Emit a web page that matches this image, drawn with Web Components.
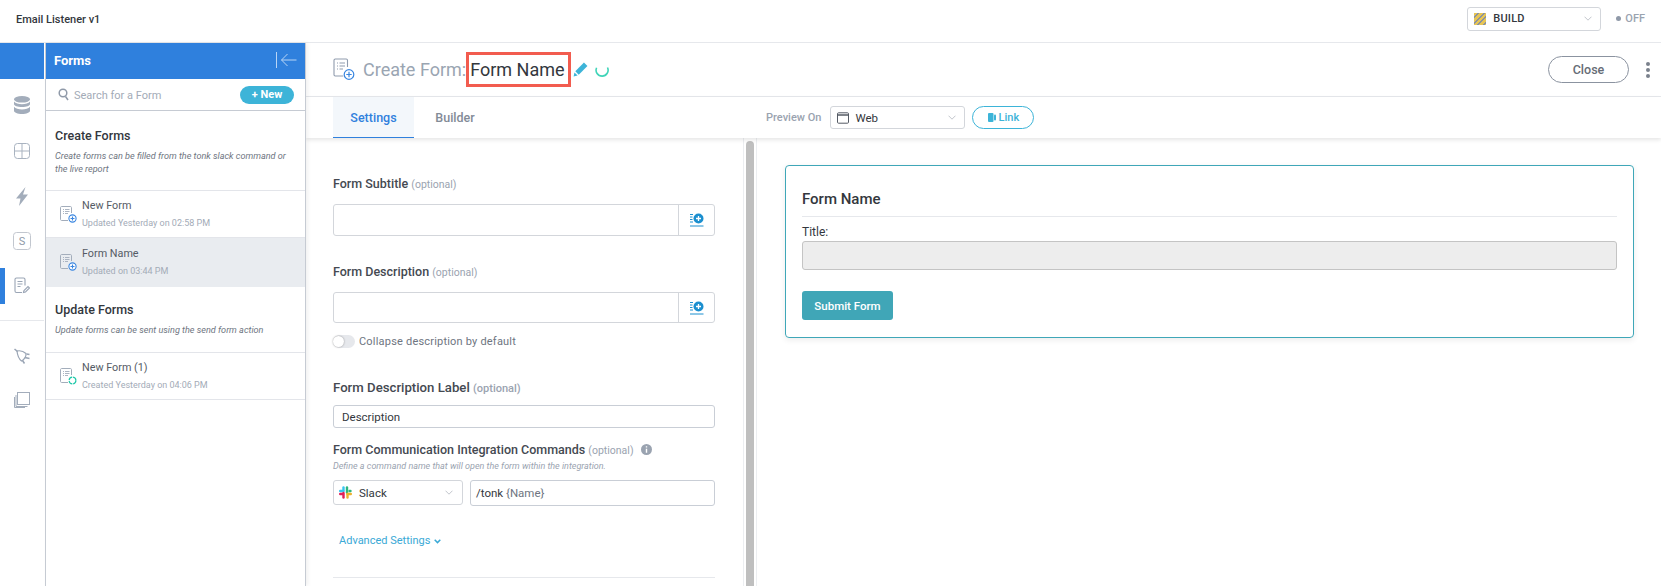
<!DOCTYPE html>
<html lang="en">
<head>
<meta charset="utf-8">
<title>Email Listener v1</title>
<style>
  html, body { margin: 0; height: 100%; overflow: hidden; }
  body { font-family: Roboto, "Liberation Sans", sans-serif; color: #33373d; background: #fff; }
  app-shell { height: 586px; }
</style>
</head>
<body>

<app-shell>
  <top-bar slot="top" name="Email Listener v1"></top-bar>
  <side-rail slot="rail"></side-rail>
  <forms-panel slot="panel">
    <forms-group title="Create Forms" note="Create forms can be filled from the tonk slack command or the live report" style="--note-h:80px;--pad:17px">
      <form-item name="New Form" meta="Updated Yesterday on 02:58 PM" kind="create"></form-item>
      <form-item name="Form Name" meta="Updated on 03:44 PM" kind="create" active></form-item>
    </forms-group>
    <forms-group title="Update Forms" note="Update forms can be sent using the send form action" style="--note-h:66px;--pad:15px">
      <form-item name="New Form (1)" meta="Created Yesterday on 04:06 PM" kind="update"></form-item>
    </forms-group>
  </forms-panel>
  <form-header slot="head" label="Create Form:" name="Form Name"></form-header>
  <tab-bar slot="tabs"></tab-bar>
  <settings-pane slot="settings"></settings-pane>
  <preview-pane slot="preview"></preview-pane>
</app-shell>

<script>
// small helper, every element gets the same open shadow root setup
function mount(el, html) {
  el.attachShadow({ mode: 'open' }).innerHTML = html;
}

const chevron = `<svg width="8" height="5" viewBox="0 0 8 5" fill="none" stroke="#c2c6cc" stroke-width="1"><path d="M.5.7L4 4.200 7.500.7"/></svg>`;

const formIcon = (badge) => `<svg width="17" height="17" viewBox="0 0 17 17" fill="none" style="flex:none">
  <path d="M11.500 7V1.600C11.500 1 11 .5 10.400.5H1.600C1 .5.5 1 .5 1.600v11.800c0 .6.5 1.100 1.100 1.100h6.400" stroke="#a3adbb" stroke-width="1"/>
  <path d="M3 3.500h1M5 3.500h4.500M3 5.500h1M5 5.500h4.500M3 7.500h1M5 7.500h3" stroke="#a3adbb" stroke-width=".9"/>
  ${badge === 'update'
    ? '<circle cx="12.500" cy="12.500" r="3.400" stroke="#1fc8a9" stroke-width="1.200" stroke-dasharray="4.500 .9"/>'
    : '<circle cx="12.500" cy="12.500" r="3.600" fill="#fff" stroke="#3a86e0" stroke-width="1.100"/><path d="M12.500 10.500v4M10.500 12.500h4" stroke="#3a86e0" stroke-width="1.100"/>'}
</svg>`;

class AppShell extends HTMLElement {
  connectedCallback() {
    mount(this, `<style>
      :host { display: grid; grid-template-columns: 45px 261px 1fr; grid-template-rows: 43px 54px 41px 1fr; overflow: hidden; }
      ::slotted([slot=top]) { grid-column: 1 / -1; }
      ::slotted([slot=rail]) { grid-row: 2 / 5; }
      ::slotted([slot=panel]) { grid-row: 2 / 5; }
      .body { grid-column: 3; grid-row: 4; display: flex; min-height: 0; }
      .bar { width: 14px; flex: none; padding: 3px 0 0 2px; border-left: 1px solid #eceef1; border-right: 1px solid #eceef1; box-sizing: border-box; margin-right: 1px; }
      .bar i { display: block; width: 8px; height: 100%; background: #bfbfbf; border-radius: 4px 4px 0 0; }
    </style>
    <slot name="top"></slot>
    <slot name="rail"></slot>
    <slot name="panel"></slot>
    <slot name="head"></slot>
    <slot name="tabs"></slot>
    <div class="body">
      <slot name="settings"></slot>
      <div class="bar"><i></i></div>
      <slot name="preview"></slot>
    </div>`);
  }
}

class TopBar extends HTMLElement {
  connectedCallback() {
    mount(this, `<style>
      :host { display: flex; align-items: center; box-sizing: border-box; border-bottom: 1px solid #e6e8ec; padding: 0 16px 0 16px; font-size: 11px; font-weight: 500; color: #33373d; }
      .name { flex: 1; margin-top: -4px; }
      .env { width: 134px; height: 24px; box-sizing: border-box; border: 1px solid #d3d6db; border-radius: 3px; display: flex; align-items: center; padding: 0 8px 0 6px; gap: 7px; margin: -5px 15px 0 0; font-size: 11px; letter-spacing: .2px; }
      .env span { flex: 1; }
      .swatch { width: 12px; height: 12px; background: repeating-linear-gradient(135deg, #e7c554 0 2.500px, #8b93a0 2.500px 4px); }
      .off { color: #9aa3b0; font-size: 11px; margin-top: -5px; display: flex; align-items: center; gap: 4px; }
      .off i { width: 5px; height: 5px; border-radius: 50%; background: #8f99a8; }
    </style>
    <div class="name">${this.getAttribute('name')}</div>
    <div class="env"><div class="swatch"></div><span>BUILD</span>${chevron}</div>
    <div class="off"><i></i>OFF</div>`);
  }
}

class SideRail extends HTMLElement {
  connectedCallback() {
    mount(this, `<style>
      :host { display: flex; flex-direction: column; align-items: stretch; box-sizing: border-box; border-right: 1px solid #fff; }
      .head { height: 36px; background: #2f80dd; flex: none; }
      .ico { display: flex; justify-content: center; align-items: center; position: relative; flex: none; }
      .on::before { content: ""; position: absolute; left: 0; top: 5px; bottom: 4px; width: 5px; background: #2f80dd; }
      hr { border: 0; border-top: 1px solid #e6e8ec; margin: 12px 0 14px; width: 100%; }
    </style>
    <div class="head"></div>
    <div class="ico" style="height:45px;margin-top:4px"><svg width="16" height="19" viewBox="0 0 16 19" fill="#a3adbb"><ellipse cx="8" cy="3.300" rx="8" ry="3.300"/><path d="M0 5.600c1.500 2 4.500 2.700 8 2.700s6.500-.7 8-2.700v2.400c0 1.800-3.600 3.100-8 3.100S0 9.800 0 8z"/><path d="M0 10.800c1.500 2 4.500 2.700 8 2.700s6.500-.7 8-2.700v4c0 1.800-3.600 3.200-8 3.200S0 16.600 0 14.800z"/></svg></div>
    <div class="ico" style="height:46px"><svg width="16" height="16" viewBox="0 0 16 16" fill="none" stroke="#a9b3c0" stroke-width="1"><rect x=".5" y=".5" width="15" height="15" rx="3"/><path d="M8 .5v15M.5 8h15"/></svg></div>
    <div class="ico" style="height:44px"><svg width="12" height="19" viewBox="0 0 12 19" fill="#a3adbb"><path d="M9.500 0L0 11.500h4.500L3 19l9-11.500H7z"/></svg></div>
    <div class="ico" style="height:45px"><svg width="18" height="18" viewBox="0 0 18 18" fill="none"><rect x=".5" y=".5" width="17" height="17" rx="3" stroke="#c2c7cf" stroke-width="1"/><text x="9" y="13" font-family="Roboto, sans-serif" font-size="11" text-anchor="middle" fill="#8f99a8">S</text></svg></div>
    <div class="ico on" style="height:45px"><svg width="16" height="17" viewBox="0 0 16 17" fill="none" stroke="#9aa5b5" stroke-width="1.100"><path d="M8 15.500H2.500c-.9 0-1.500-.6-1.500-1.500V2.500C1 1.600 1.600 1 2.500 1h7c.9 0 1.500.6 1.500 1.500v6"/><path d="M3.500 4.500h5M3.500 7h5M3.500 9.500h3"/><path d="M9.500 15.500l.5-2 4-4 1.500 1.500-4 4z"/></svg></div>
    <hr>
    <div class="ico" style="height:42px"><svg width="16" height="16" viewBox="0 0 16 16" fill="none" stroke="#9aa5b5" stroke-width="1.200"><path d="M.5 1l3 2.500" stroke-width="1.600"/><path d="M3 3c3-.6 6.500.2 9 2.500.3 3-1.800 6.300-4.500 7.500C5 11 3.400 7 3 3z"/><path d="M12.500 6l3 .5M10.800 9.500l4.700 1M8.500 12.500l2 3" stroke-width="1.500"/></svg></div>
    <div class="ico" style="height:46px"><svg width="16" height="16" viewBox="0 0 16 16" fill="none" stroke="#a3adbb" stroke-width="1"><rect x="3.500" y=".5" width="12" height="12"/><path d="M2 3v11.500h11.500M.5 5v10.500H11"/></svg></div>`);
  }
}

class FormsPanel extends HTMLElement {
  connectedCallback() {
    mount(this, `<style>
      :host { display: flex; flex-direction: column; box-sizing: border-box; border-left: 1px solid #c6cbd3; border-right: 1px solid #c6cbd3; box-shadow: 2px 0 4px rgba(0,0,0,.06); position: relative; z-index: 2; background: #fff; }
      .head { height: 36px; flex: none; background: #2f80dd; color: #fff; font-size: 13px; font-weight: 700; display: flex; align-items: center; justify-content: space-between; padding: 0 8px 2px 8px; box-sizing: border-box; }
      .search { height: 32px; box-sizing: border-box; border-bottom: 1px solid #c6cbd3; display: flex; align-items: center; padding: 0 11px 0 12px; gap: 5px; font-size: 11px; color: #a3abb7; flex: none; }
      .search span { flex: 1; padding-top: 1px; }
      .new { width: 54px; height: 18px; border-radius: 9px; background: #3db4d8; color: #fff; font-size: 11px; font-weight: 700; display: flex; align-items: center; justify-content: center; }
    </style>
    <div class="head">Forms<svg width="21" height="16" viewBox="0 0 21 16" fill="none" stroke="#b9d5f5"><path d="M.5 0v16M20.500 8H5.500M11.500 2L5.500 8l6 6"/></svg></div>
    <div class="search">
      <svg width="11" height="13" viewBox="0 0 11 13" fill="none" stroke="#8f99a8" stroke-width="1.500"><circle cx="5" cy="5" r="3.800"/><path d="M7.500 8.500L10 12"/></svg>
      <span>Search for a Form</span>
      <div class="new">+ New</div>
    </div>
    <slot></slot>`);
  }
}

class FormsGroup extends HTMLElement {
  connectedCallback() {
    mount(this, `<style>
      :host { display: block; }
      .top { height: var(--note-h); box-sizing: border-box; padding: var(--pad) 8px 0 9px; border-bottom: 1px solid #e3e5ea; }
      h3 { margin: 0 0 6px; font-size: 12.500px; font-weight: 500; color: #33373d; line-height: 16px; }
      p { margin: 0; font-size: 9.100px; font-style: italic; line-height: 13px; color: #6e7581; }
    </style>
    <div class="top"><h3>${this.getAttribute('title')}</h3><p>${this.getAttribute('note')}</p></div>
    <slot></slot>`);
  }
}

class FormItem extends HTMLElement {
  connectedCallback() {
    const active = this.hasAttribute('active');
    mount(this, `<style>
      :host { display: flex; align-items: center; gap: 5px; height: 47px; box-sizing: border-box; padding: 0 0 0 14px; background: ${active ? '#e9ecf0' : '#fff'}; border-bottom: 1px solid ${active ? '#e9ecf0' : '#e3e5ea'}; }
      :host([active]) { height: 49px; }
      .name { font-size: 10.800px; color: #555b65; line-height: 14px; margin-bottom: 4px; }
      .meta { font-size: 9px; color: #a3abb7; line-height: 12px; }
    </style>
    ${formIcon(this.getAttribute('kind'))}
    <div><div class="name">${this.getAttribute('name')}</div><div class="meta">${this.getAttribute('meta')}</div></div>`);
  }
}

class FormHeader extends HTMLElement {
  connectedCallback() {
    mount(this, `<style>
      :host { display: flex; align-items: center; box-sizing: border-box; border-bottom: 1px solid #e6e8ec; padding: 0 0 0 27px; font-size: 18px; }
      svg.form { flex: none; margin-right: 8px; }
      .label { color: #9aa5b2; }
      .name { border: 3px solid #f25c4f; color: #33373d; padding: 0 0 0 1px; height: 29px; line-height: 29px; width: 98px; white-space: nowrap; }
      .spin { margin-left: 7px; }
      .grow { flex: 1; }
      .close { width: 81px; height: 27px; box-sizing: border-box; border: 1px solid #8b93a0; border-radius: 14px; font-size: 12.500px; font-weight: 500; color: #666c76; display: flex; align-items: center; justify-content: center; margin-right: 17px; }
      .dots { display: flex; flex-direction: column; gap: 2px; margin-right: 11px; }
      .dots i { width: 4px; height: 4px; border-radius: 50%; background: #7a818c; }
    </style>
    <svg class="form" width="22" height="23" viewBox="0 0 22 23" fill="none">
      <path d="M14.500 9V2.200C14.500 1.400 14 1 13.200 1H2.300C1.500 1 1 1.400 1 2.200v14.600c0 .8.500 1.200 1.300 1.200h8" stroke="#8f9bad" stroke-width="1.100"/>
      <path d="M4 5h1M6.500 5H12M4 8h1M6.500 8H12M4 11h1M6.500 11H10" stroke="#8f9bad"/>
      <circle cx="16" cy="16.500" r="4.800" stroke="#3a86e0" stroke-width="1.200" fill="#fff"/>
      <path d="M16 13.800v5.400M13.300 16.500h5.400" stroke="#3a86e0" stroke-width="1.200"/>
    </svg>
    <span class="label">${this.getAttribute('label')}</span>
    <span class="name">${this.getAttribute('name')}</span>
    <svg style="margin-left:2px" width="15" height="15" viewBox="0 0 13 13" fill="#3db4d8"><path d="M9.500.5l3 3-7.500 7.500-3-3z"/><path d="M1.300 9l2.700 2.700-3.500.8z"/></svg>
    <svg class="spin" width="14" height="14" viewBox="0 0 14 14" fill="none" stroke="#3fd4b8" stroke-width="1.600"><path d="M12.500 4.500A6 6 0 1 1 1.600 4.700"/></svg>
    <div class="grow"></div>
    <div class="close">Close</div>
    <div class="dots"><i></i><i></i><i></i></div>`);
  }
}

class TabBar extends HTMLElement {
  connectedCallback() {
    mount(this, `<style>
      :host { display: flex; align-items: stretch; box-sizing: border-box; padding-left: 27px; font-size: 12.500px; font-weight: 500; box-shadow: 0 2px 4px rgba(0,0,0,.1); position: relative; z-index: 1; background: #fff; }
      .tab { display: flex; align-items: center; justify-content: center; color: #838b97; width: 81px; }
      .on { background: #f3f7fb; color: #2f80dd; box-shadow: inset 0 -1px 0 #2f80dd; }
      .second { width: 82px; }
      .wrap { display: flex; align-items: center; margin-left: 270px; font-size: 11px; }
      .lab { color: #9aa3b0; margin-right: 9px; }
      .sel { width: 135px; height: 23px; box-sizing: border-box; border: 1px solid #d3d6db; border-radius: 3px; display: flex; align-items: center; gap: 6px; padding: 0 8px 0 6px; color: #33373d; font-weight: 400; font-size: 11.500px; margin-right: 7px; }
      .sel span { flex: 1; }
      .link { width: 62px; height: 23px; box-sizing: border-box; border: 1px solid #3db4d8; border-radius: 12px; color: #3db4d8; display: flex; align-items: center; justify-content: center; gap: 3px; }
    </style>
    <div class="tab on">Settings</div>
    <div class="tab second">Builder</div>
    <div class="wrap">
      <span class="lab">Preview On</span>
      <div class="sel"><svg width="12" height="12" viewBox="0 0 12 12" fill="none" stroke="#555b65"><rect x=".5" y=".8" width="11" height="10.400" rx="1"/><path d="M.5 3h11" stroke-width="1.500"/></svg><span>Web</span>${chevron}</div>
      <div class="link"><svg width="8" height="9" viewBox="0 0 8 9" fill="#3db4d8"><rect width="5.500" height="9" rx="1"/><rect x="6" y="1.500" width="2" height="6" rx="1"/></svg>Link</div>
    </div>`);
  }
}

class FieldLabel extends HTMLElement {
  connectedCallback() {
    mount(this, `<style>
      :host { display: block; font-size: 12.500px; font-weight: 500; color: #444951; line-height: 16px; }
      :host([big]) { font-size: 13.200px; }
      span { font-size: 10.500px; font-weight: 400; color: #9aa3b0; line-height: 1; }
      :host([big]) span { font-size: 11px; font-weight: 500; }
    </style><slot></slot> <span>${this.getAttribute('hint') || ''}</span> <slot name="after"></slot>`);
  }
}

class RichInput extends HTMLElement {
  connectedCallback() {
    mount(this, `<style>
      :host { display: flex; height: 32px; box-sizing: border-box; border: 1px solid #d3d6db; border-radius: 3px; justify-content: flex-end; }
      div { width: 35px; border-left: 1px solid #d3d6db; display: flex; align-items: center; justify-content: center; }
    </style><div><svg width="14" height="14" viewBox="0 0 14 14" fill="none"><path d="M0 1.500h3M0 4h2.500M0 6.500h2.500M0 9h3M0 13h13.500" stroke="#1b8fcf" stroke-width="1"/><circle cx="8.500" cy="5.500" r="5" fill="#1b8fcf"/><path d="M8.500 3v5M6 5.500h5" stroke="#fff" stroke-width="1.300"/></svg></div>`);
  }
}

class SettingsPane extends HTMLElement {
  connectedCallback() {
    mount(this, `<style>
      :host { display: block; width: 437px; flex: none; box-sizing: border-box; padding: 38px 28px 0 27px; overflow: hidden; }
      .box { border: 1px solid #c9ced6; border-radius: 3px; box-sizing: border-box; font-size: 11.500px; color: #33373d; display: flex; align-items: center; padding: 0 8px; }
      .toggle { display: flex; align-items: center; gap: 4px; margin-top: 12px; font-size: 11px; color: #6e7581; letter-spacing: .2px; }
      .sw { width: 22px; height: 13px; border-radius: 7px; background: #e6e8ec; position: relative; }
      .sw::after { content: ""; position: absolute; left: 0; top: 1px; width: 11px; height: 11px; border-radius: 50%; background: #fff; box-shadow: 0 0 2px rgba(0,0,0,.4); }
      .hint { font-size: 9px; font-style: italic; color: #9aa3b0; margin: 3px 0 8px; line-height: 11px; }
      .row { display: flex; gap: 7px; }
      .sl { width: 130px; height: 25px; gap: 7px; padding: 0 9px 0 5px; flex: none; border-color: #d3d6db; }
      .sl span { flex: 1; }
      .cmd { flex: 1; height: 26px; padding: 0 5px; }
      .cmd em { font-style: normal; color: #6e7581; }
      .adv { color: #3aa9d6; font-size: 11px; margin: 28px 0 0 6px; display: flex; align-items: center; gap: 4px; line-height: 14px; }
      hr { border: 0; border-top: 1px solid #e6e8ec; margin: 29px 0 0; }
      .info { vertical-align: -1px; margin-left: 4px; }
    </style>
    <field-label hint="(optional)">Form Subtitle</field-label>
    <rich-input style="margin-top:12px"></rich-input>
    <field-label hint="(optional)" style="margin-top:28px">Form Description</field-label>
    <rich-input style="margin-top:12px;height:31px"></rich-input>
    <div class="toggle"><div class="sw"></div>Collapse description by default</div>
    <field-label big hint="(optional)" style="margin-top:32px">Form Description Label</field-label>
    <div class="box" style="height:23px;margin-top:9px">Description</div>
    <field-label hint="(optional)" style="margin-top:14px">Form Communication Integration Commands <svg slot="after" class="info" width="11" height="11" viewBox="0 0 11 11"><circle cx="5.500" cy="5.500" r="5.500" fill="#9aa3b0"/><path d="M5.500 2.200v1.300M5.500 4.800v4" stroke="#fff" stroke-width="1.400"/></svg></field-label>
    <div class="hint">Define a command name that will open the form within the integration.</div>
    <div class="row">
      <div class="box sl"><svg width="13" height="13" viewBox="0 0 13 13" stroke-width="2.400" stroke-linecap="round"><path d="M4.500 1.500v3.500" stroke="#36c5f0"/><path d="M1.200 5h3" stroke="#36c5f0"/><path d="M8 1.500v5" stroke="#2eb67d"/><path d="M11.500 5h-1" stroke="#2eb67d"/><path d="M8.500 11.500V8" stroke="#ecb22e"/><path d="M11.800 8H8.500" stroke="#ecb22e"/><path d="M4.500 7v4.500" stroke="#e01e5a"/><path d="M1.200 8H4" stroke="#e01e5a"/></svg><span>Slack</span>${chevron}</div>
      <div class="box cmd">/tonk&nbsp;<em>{Name}</em></div>
    </div>
    <div class="adv">Advanced Settings <svg width="7" height="5" viewBox="0 0 7 5" fill="none" stroke="#3aa9d6" stroke-width="1.500"><path d="M.7.8l2.800 2.800L6.300.8"/></svg></div>
    <hr>`);
  }
}

class PreviewPane extends HTMLElement {
  connectedCallback() {
    mount(this, `<style>
      :host { display: block; flex: 1; box-sizing: border-box; padding: 27px 27px 0 27px; font-size: 12px; }
      .card { box-sizing: border-box; height: 173px; border: 1px solid #3fa7b8; border-radius: 4px; padding: 24px 16px 0; box-shadow: 0 2px 6px rgba(0,0,0,.08); }
      h4 { margin: 0; font-size: 15px; font-weight: 500; color: #33373d; line-height: 18px; padding-bottom: 8px; border-bottom: 1px solid #e6e8ec; }
      label { display: block; margin-top: 8px; line-height: 14px; color: #33373d; }
      .inp { height: 29px; margin-top: 2px; box-sizing: border-box; background: #ededed; border: 1px solid #c4c4c4; border-radius: 3px; }
      .btn { width: 91px; height: 29px; margin-top: 21px; border-radius: 3px; background: #40a6b7; color: #fff; font-weight: 500; font-size: 11.500px; display: flex; align-items: center; justify-content: center; }
    </style>
    <div class="card">
      <h4>Form Name</h4>
      <label>Title:</label>
      <div class="inp"></div>
      <div class="btn">Submit Form</div>
    </div>`);
  }
}

customElements.define('app-shell', AppShell);
customElements.define('top-bar', TopBar);
customElements.define('side-rail', SideRail);
customElements.define('forms-panel', FormsPanel);
customElements.define('forms-group', FormsGroup);
customElements.define('form-item', FormItem);
customElements.define('form-header', FormHeader);
customElements.define('tab-bar', TabBar);
customElements.define('field-label', FieldLabel);
customElements.define('rich-input', RichInput);
customElements.define('settings-pane', SettingsPane);
customElements.define('preview-pane', PreviewPane);
</script>
</body>
</html>
